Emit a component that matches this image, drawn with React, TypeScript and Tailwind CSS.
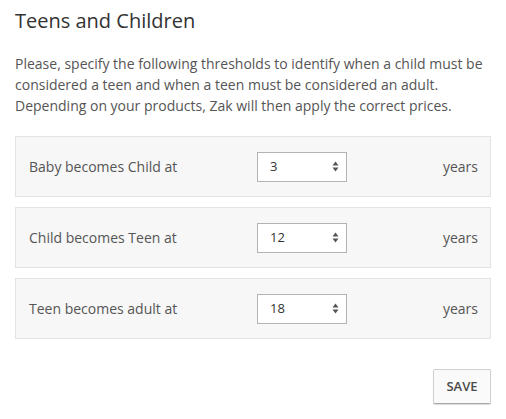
const rows = [
  { label: "Baby becomes Child at", value: "3" },
  { label: "Child becomes Teen at", value: "12" },
  { label: "Teen becomes adult at", value: "18" },
];

function Spinner() {
  return (
    <svg width="7" height="11" viewBox="0 0 7 11" className="text-[#555]">
      <path d="M3.5 0.5 L6.5 4.5 L0.5 4.5 Z" fill="currentColor" />
      <path d="M3.5 10.5 L6.5 6.5 L0.5 6.5 Z" fill="currentColor" />
    </svg>
  );
}

export default function App() {
  return (
    <div className="w-[506px] h-[419px] bg-white font-['Open_Sans',sans-serif] text-[#555] px-[15px]">
      <h1 className="text-[20px] leading-[28px] text-[#333] pt-[7px]">Teens and Children</h1>
      <p className="text-[14px] leading-[21px] mt-[18px] mb-[20px]">
        Please, specify the following thresholds to identify when a child must be considered a teen and
        when a teen must be considered an adult. Depending on your products, Zak will then apply the correct
        prices.
      </p>

      <div className="flex flex-col gap-[10px]">
        {rows.map((r) => (
          <div
            key={r.label}
            className="h-[61px] flex items-center bg-[#f7f7f7] border border-[#e3e3e3] pl-[13px] pr-[12px]"
          >
            <div className="w-[228px] text-[14px]">{r.label}</div>
            <div className="w-[90px] h-[30px] bg-white border border-[#b3b3b3] flex items-center justify-between pl-[12px] pr-[7px] text-[13px] text-[#333]">
              <span>{r.value}</span>
              <Spinner />
            </div>
            <div className="flex-1 text-right text-[14px]">years</div>
          </div>
        ))}
      </div>

      <div className="flex justify-end mt-[30px]">
        <button className="w-[58px] h-[35px] bg-[#fafafa] border border-[#d0d0d0] border-b-[#a8a8a8] rounded-[2px] shadow-[0_1px_1px_rgba(0,0,0,0.15)] text-[13px] font-semibold text-[#4a4a4a]">
          SAVE
        </button>
      </div>
    </div>
  );
}
